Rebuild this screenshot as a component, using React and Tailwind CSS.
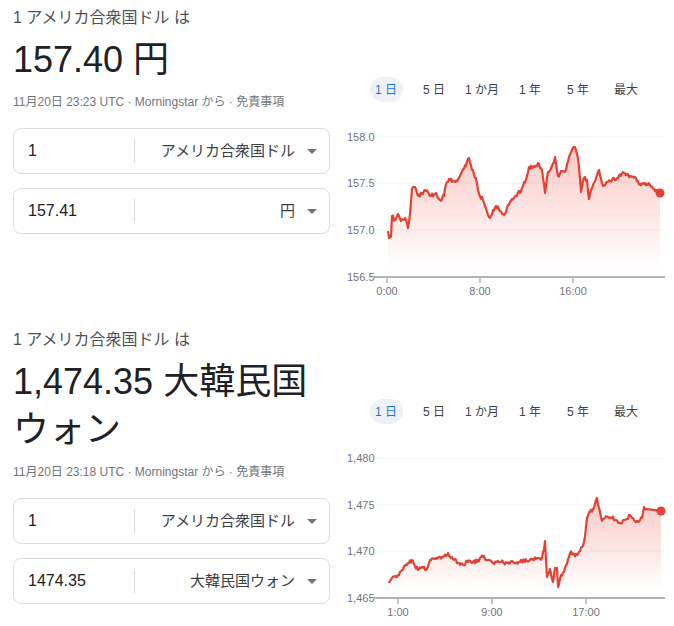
import React from "react";

// 通貨換算カード x2 (Google 風)
const tabs = ["1 日", "5 日", "1 か月", "1 年", "5 年", "最大"];

const rng = (seed) => () => {
  seed |= 0;
  seed = (seed + 0x6d2b79f5) | 0;
  let t = Math.imul(seed ^ (seed >>> 15), 1 | seed);
  t = (t + Math.imul(t ^ (t >>> 7), 61 | t)) ^ t;
  return ((t ^ (t >>> 14)) >>> 0) / 4294967296;
};

// key points -> jagged line
const buildLine = (keys, seed, amp) => {
  const r = rng(seed);
  const pts = [];
  for (let i = 0; i < keys.length - 1; i++) {
    const [x0, y0] = keys[i];
    const [x1, y1, flat] = keys[i + 1];
    const steps = Math.max(1, Math.round((x1 - x0) / 1.1));
    for (let s = 0; s < steps; s++) {
      const t = s / steps;
      const n = s === 0 || flat ? 0 : (r() - 0.5) * 2 * amp;
      pts.push([x0 + (x1 - x0) * t, y0 + (y1 - y0) * t + n]);
    }
  }
  pts.push(keys[keys.length - 1].slice(0, 2));
  return pts;
};

const jpyKeys = [
  [388, 231], [389, 238], [391, 237], [392, 216], [395, 220], [398, 214], [401, 221],
  [405, 218], [408, 228], [410, 214], [412, 189], [415, 187], [418, 196], [422, 193],
  [426, 191], [431, 196], [436, 193], [440, 200], [444, 196], [446, 184], [450, 180],
  [455, 182], [460, 176], [464, 169], [469, 158], [472, 170], [476, 178], [479, 194],
  [483, 200], [486, 208], [490, 218], [493, 210], [496, 206], [500, 211], [504, 215],
  [508, 205], [512, 199], [517, 196], [522, 188], [526, 180], [529, 167], [534, 166],
  [539, 164], [542, 170], [545, 193], [548, 172], [552, 166], [555, 157], [558, 176],
  [562, 171], [566, 170], [569, 157], [572, 150], [575, 147], [578, 158], [581, 192],
  [584, 178], [587, 180], [589, 199], [592, 188], [596, 178], [599, 170], [603, 186],
  [607, 182], [612, 180], [617, 178], [622, 173], [627, 174], [632, 177], [636, 178],
  [640, 184], [645, 183], [650, 185], [654, 189], [657, 191], [660, 193],
];

const krwKeys = [
  [389, 583], [392, 578], [398, 575], [402, 570], [405, 566], [409, 563], [412, 560],
  [415, 566], [418, 570], [422, 567], [426, 570], [430, 560], [435, 559], [440, 557],
  [444, 556], [448, 553], [451, 558], [454, 560], [458, 563], [463, 565], [468, 562],
  [473, 562], [478, 560], [483, 557], [488, 560], [493, 563], [500, 562], [507, 563],
  [513, 562], [520, 562], [527, 561], [533, 559], [538, 558], [542, 558], [544, 550],
  [545, 541], [547, 577], [550, 569], [553, 582], [555, 568], [557, 568], [558, 587],
  [561, 575], [564, 572], [567, 564], [570, 553], [574, 554], [577, 555], [580, 551],
  [583, 546], [585, 537], [587, 518], [590, 512], [593, 509], [596, 500], [597, 498],
  [599, 508], [602, 521], [605, 518], [608, 517], [612, 518], [616, 520], [620, 523],
  [625, 520], [630, 515], [633, 518], [636, 522], [640, 520], [642, 518], [644, 507],
  [647, 509], [661, 511, 1],
];

const Chart = ({ vy, keys, seed, yLabels, xLabels, axisY, top, gid }) => {
  const line = buildLine(keys, seed, 2.1);
  const d = line.map((p, i) => `${i ? "L" : "M"}${p[0].toFixed(1)} ${p[1].toFixed(1)}`).join(" ");
  const last = line[line.length - 1];
  const area = `${d} L${last[0]} ${axisY} L${line[0][0]} ${axisY} Z`;
  return (
    <svg width="334" height="180" viewBox={`340 ${vy} 334 180`} className="block">
      <defs>
        <linearGradient id={gid} x1="0" y1={top} x2="0" y2={axisY - 8} gradientUnits="userSpaceOnUse">
          <stop offset="0" stopColor="#ea4335" stopOpacity="0.28" />
          <stop offset="1" stopColor="#ea4335" stopOpacity="0" />
        </linearGradient>
      </defs>
      {yLabels.map(([label, y], i) => (
        <g key={label}>
          {i < yLabels.length - 1 && <line x1="376" x2="664" y1={y} y2={y} stroke="#f1f3f4" strokeWidth="1" />}
          <text x="347" y={y + 4} fontSize="11" fill="#70757a" fontFamily="Liberation Sans, Arial, sans-serif">
            {label}
          </text>
        </g>
      ))}
      <path d={area} fill={`url(#${gid})`} />
      <line x1="373" x2="665" y1={axisY} y2={axisY} stroke="#b0b3b8" strokeWidth="2" />
      {xLabels.map(([label, x]) => (
        <g key={label}>
          <line x1={x} x2={x} y1={axisY} y2={axisY + 6} stroke="#b0b3b8" strokeWidth="1.5" />
          <text x={x} y={axisY + 18} fontSize="11" fill="#70757a" textAnchor="middle" fontFamily="Liberation Sans, Arial, sans-serif">
            {label}
          </text>
        </g>
      ))}
      <path d={d} fill="none" stroke="#e34133" strokeWidth="2.2" strokeLinejoin="round" />
      <circle cx={last[0]} cy={last[1]} r="4.5" fill="#e34133" />
    </svg>
  );
};

const Caret = () => (
  <svg width="10" height="5" viewBox="0 0 10 5" className="shrink-0">
    <path d="M0 0h10L5 5z" fill="#70757a" />
  </svg>
);

const ConvBox = ({ amount, currency }) => (
  <div className="flex h-[46px] items-center rounded-lg border border-[#dadce0] bg-white">
    <div className="w-[120px] pl-[14px] text-[16px] text-[#202124]">{amount}</div>
    <div className="h-[24px] w-px bg-[#dadce0]" />
    <div className="flex flex-1 items-center justify-end gap-[12px] pr-[12px] text-[15px] text-[#3c4043]">
      <span>{currency}</span>
      <Caret />
    </div>
  </div>
);

const Block = ({ value, stamp, amount, currency, chart }) => (
  <div className="mb-[22px] flex items-start">
    <div className="w-[317px] shrink-0 pl-[13px] box-content">
      <div className="pt-[6px] text-[16px] leading-[24px] text-[#4d5156]">1 アメリカ合衆国ドル は</div>
      <div className="mt-[6px] text-[36px] leading-[48px] text-[#202124]">{value}</div>
      <div className="mt-[10px] text-[12px] leading-[16px] text-[#70757a]">
        {stamp} · Morningstar から · 免責事項
      </div>
      <div className="mt-[18px] flex flex-col gap-[14px]">
        <ConvBox amount="1" currency="アメリカ合衆国ドル" />
        <ConvBox amount={amount} currency={currency} />
      </div>
    </div>
    <div className="ml-[10px] w-[334px] shrink-0">
      <div className="mt-[77px] flex pl-[22px]">
        {tabs.map((t, i) => (
          <div key={t} className="flex w-[48px] justify-center">
            <span
              className={
                i === 0
                  ? "flex h-[25px] w-[33px] items-center justify-center rounded-full bg-[#eef1f7] text-[12px] text-[#1a73e8]"
                  : "flex h-[25px] items-center justify-center text-[12px] text-[#3c4043]"
              }
            >
              {t}
            </span>
          </div>
        ))}
      </div>
      <div className="mt-[18px]">{chart}</div>
    </div>
  </div>
);

export default function App() {
  return (
    <div className="min-h-screen w-[674px] bg-white font-['Liberation_Sans','Noto_Sans_CJK_JP',sans-serif]">
      <Block
        value="157.40 円"
        stamp="11月20日 23:23 UTC"
        amount="157.41"
        currency="円"
        chart={
          <Chart
            vy={120}
            keys={jpyKeys}
            seed={7}
            gid="g1"
            top={150}
            axisY={277}
            yLabels={[["158.0", 137], ["157.5", 183], ["157.0", 230], ["156.5", 277]]}
            xLabels={[["0:00", 387], ["8:00", 480], ["16:00", 573]]}
          />
        }
      />
      <Block
        value="1,474.35 大韓民国ウォン"
        stamp="11月20日 23:18 UTC"
        amount="1474.35"
        currency="大韓民国ウォン"
        chart={
          <Chart
            vy={442}
            keys={krwKeys}
            seed={21}
            gid="g2"
            top={500}
            axisY={598}
            yLabels={[["1,480", 458], ["1,475", 505], ["1,470", 551], ["1,465", 598]]}
            xLabels={[["1:00", 398], ["9:00", 492], ["17:00", 586]]}
          />
        }
      />
    </div>
  );
}
